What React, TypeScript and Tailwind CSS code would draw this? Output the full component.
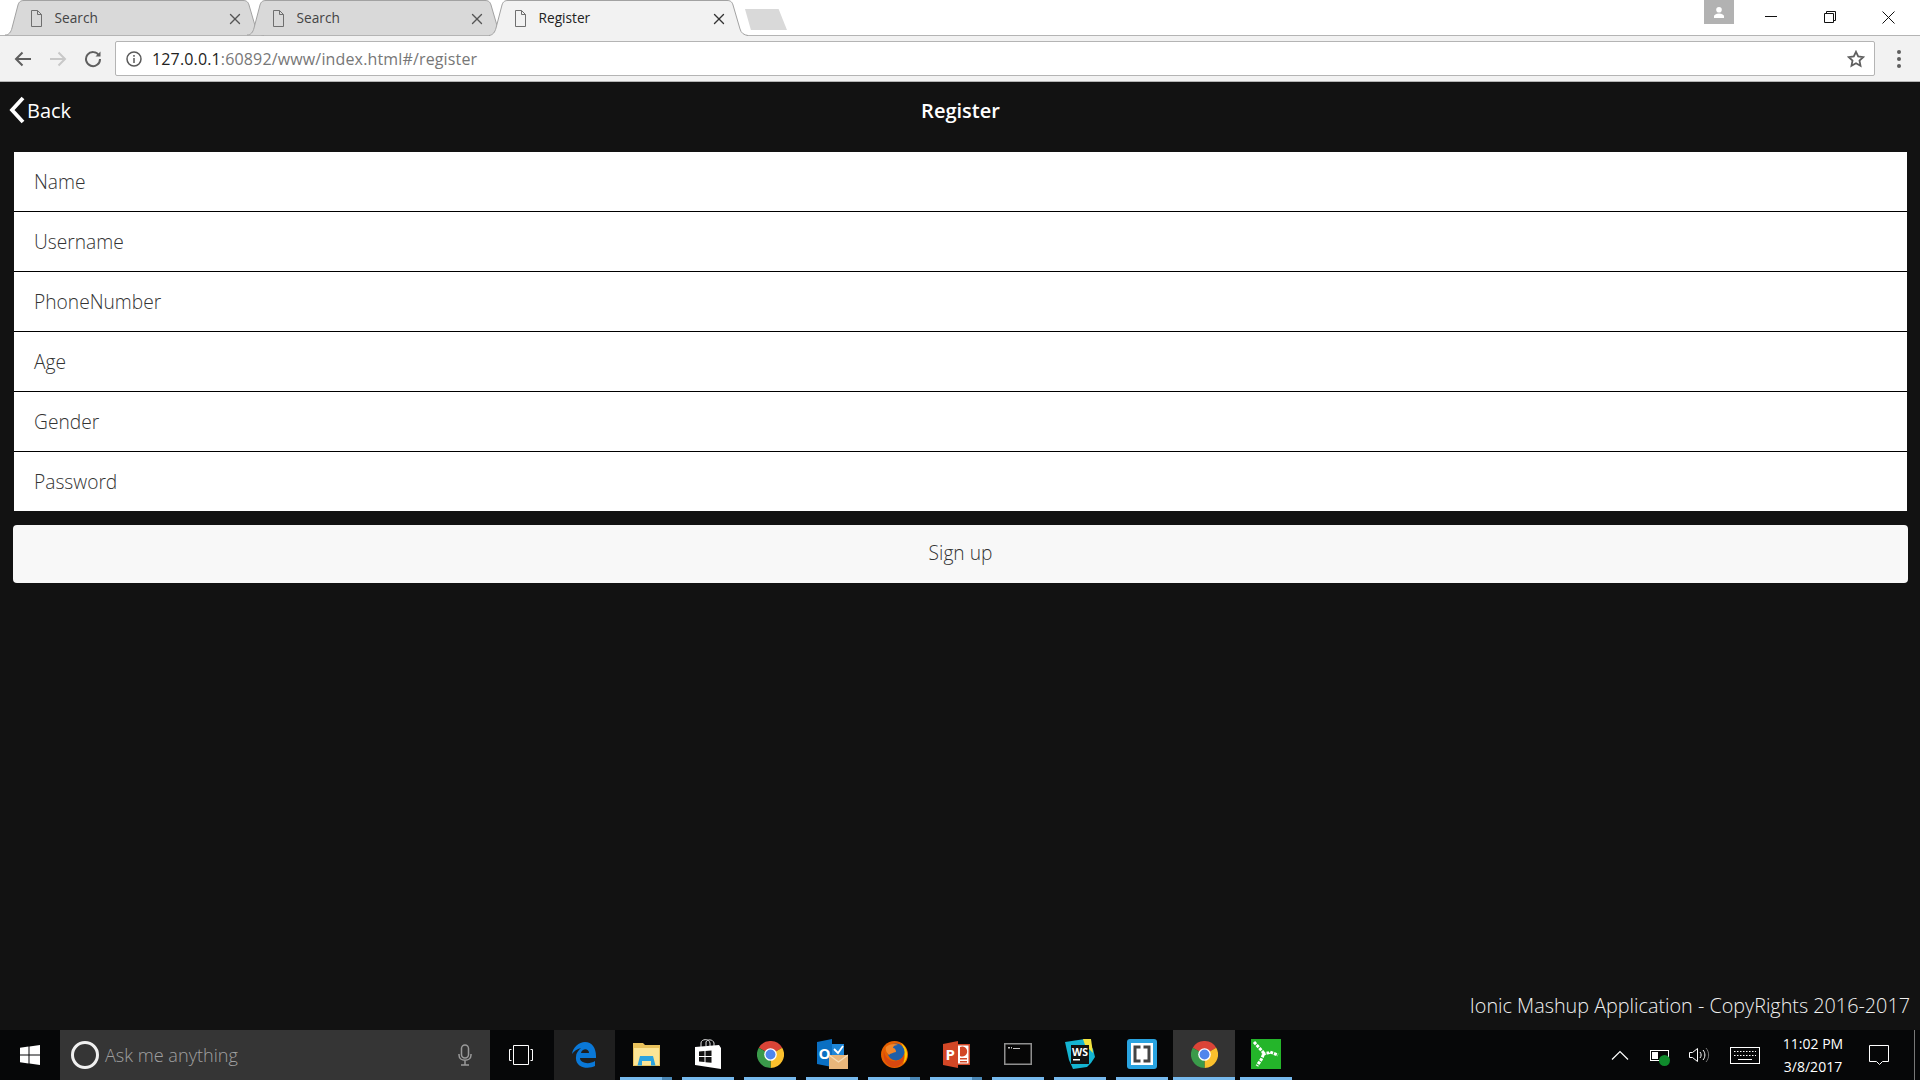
import { X } from "lucide-react";

const FONT = "[font-family:'Open_Sans','Noto_Sans',sans-serif]";

const fields = ["Name", "Username", "PhoneNumber", "Age", "Gender", "Password"];

const DocIcon = () => (
  <svg width="13" height="17" viewBox="0 0 13 17" fill="none" stroke="#6f6f6f" strokeWidth="1">
    <path d="M1.5 .5h6l4 4v12h-10z" />
    <path d="M7.5 .5v4h4" />
  </svg>
);

const Tab = ({ title, active, first }: { title: string; active?: boolean; first?: boolean }) => (
  <div className={`relative h-[37px] w-[259px] shrink-0 ${first ? "" : "-ml-[17px]"} ${active ? "z-10" : ""}`}>
    <svg className="absolute inset-0" width="259" height="37" viewBox="0 0 259 37">
      <path
        d={
          active
            ? "M0 36 V35.500 C4 35 6 32 7 28 L13 5 C14 1.500 16 .5 19 .5 H238 C241 .5 243 1.500 244 5 L251 29 C252 33 255 35 259 35.500 V36"
            : "M0 35 C4 35 6 32 7 28 L13 5 C14 1.500 16 .5 19 .5 H238 C241 .5 243 1.500 244 5 L251 29 C252 33 255 35 259 35"
        }
        fill={active ? "#f2f2f2" : "#d9d9d9"}
        stroke="#a2a2a2"
      />
    </svg>
    <div className="absolute inset-0 flex items-center pl-[25px] pr-[20px]">
      <DocIcon />
      <span className={`ml-[11.500px] flex-1 text-[13.700px] ${active ? "text-[#222]" : "text-[#444]"}`}>{title}</span>
      <X size={18} strokeWidth={1.800} color={active ? "#333" : "#555"} />
    </div>
  </div>
);

const ChromeIcon = () => (
  <svg width="27" height="27" viewBox="0 0 24 24">
    <path d="M12 12L1.600 6A12 12 0 0 1 22.400 6Z" fill="#db4437" />
    <path d="M12 12L22.400 6A12 12 0 0 1 12 24Z" fill="#fbc02d" />
    <path d="M12 12L12 24A12 12 0 0 1 1.600 6Z" fill="#3a9a4a" />
    <circle cx="12" cy="12" r="5.600" fill="#fff" />
    <circle cx="12" cy="12" r="4.400" fill="#4f86ec" />
  </svg>
);

const EdgeIcon = () => (
  <svg width="24" height="26" viewBox="0 0 24 26">
    <path
      fillRule="evenodd"
      d="M0 12C1 5 7 0 13 0C20 0 24 6 24 14V16H8C8 21 17 23 23 19V24C15 28 3 25 4 15C4 11 6 9 9 6C5 7 2 9 0 12ZM9 11H17C17 6 10 6 9 11Z"
      fill="#0a78d7"
    />
  </svg>
);

const ExplorerIcon = () => (
  <svg width="27" height="23" viewBox="0 0 27 23">
    <path d="M0 0h10l2 2h15v21H0z" fill="#e9c25c" />
    <path d="M1 5h25v17H1z" fill="#fce596" />
    <path d="M4.500 22.500L7 13h13l2.500 9.500H18V18H9v4.500z" fill="#2ba3df" />
  </svg>
);

const StoreIcon = () => (
  <svg width="26" height="30" viewBox="0 0 26 30">
    <path d="M6 8V4c0-4 8-5 9 0v4M11 7V3c1-3 7-3 8 1v3" fill="none" stroke="#ddd" strokeWidth="1" />
    <path d="M0 8L24 6L26 9V30L0 26z" fill="#fff" />
    <path d="M4 12.500l5.500-.5v5H4zM10.500 12l6-.5v5.500h-6zM4 18h5.500v5L4 22.500zM10.500 18h6v5.800l-6-.6z" fill="#111" />
  </svg>
);

const OutlookIcon = () => (
  <svg width="31" height="30" viewBox="0 0 31 30">
    <path d="M0 3L15 0v28L0 25z" fill="#0a6fc2" />
    <path d="M15 5h12v14H15z" fill="#1d86d8" />
    <path d="M17 10l4 4 5-7" fill="none" stroke="#fff" strokeWidth="1.800" />
    <text x="1.500" y="20" fontSize="15" fontWeight="700" fill="#fff" fontFamily="Open Sans">O</text>
    <path d="M12 16h19v14H12z" fill="#e9b67a" />
    <path d="M12 16l9.500 7 9.500-7" fill="none" stroke="#f6dcb5" strokeWidth="1.200" />
  </svg>
);

const FirefoxIcon = () => (
  <svg width="27" height="27" viewBox="0 0 27 27">
    <circle cx="13.500" cy="13.500" r="13.500" fill="#e66000" />
    <path d="M20 2a13.500 13.500 0 0 1 2 21c2-4 3-13-2-21z" fill="#ffcb00" />
    <circle cx="15" cy="11" r="8.500" fill="#1f5fa8" />
    <path d="M3 9c0 7 6 12 12 11 4-.5 7-3 8-7 1 7-4 13-10 13C6 26 1 18 3 9z" fill="#d9480f" />
    <path d="M5 6c3-3 9-4 12-2-3 0-5 1-5 3 2 0 3 2 3 4-3 1-5 1-7 3-2-2-4-5-3-8z" fill="#f2862a" />
  </svg>
);

const PptIcon = () => (
  <svg width="27" height="27" viewBox="0 0 27 27">
    <path d="M13 3h14v21H13z" fill="#d24726" />
    <path d="M15 4.500h10.500v18H15z" fill="#fff" />
    <path d="M17 6a5 5 0 1 1 0 9z" fill="#d24726" />
    <path d="M17 17h7v1.500h-7zM17 20h7v1.500h-7z" fill="#d24726" />
    <path d="M0 3L15 0v27L0 24z" fill="#d24726" />
    <text x="2.500" y="19" fontSize="15" fontWeight="700" fill="#fff" fontFamily="Open Sans">P</text>
  </svg>
);

const CmdIcon = () => (
  <svg width="28" height="22" viewBox="0 0 28 22">
    <path d="M.75 .75h26.500v20.500H.75z" fill="#060606" stroke="#8f8f8f" strokeWidth="1.500" />
    <path d="M4 4h2v1.500H4zM7 4h1v1.500H7zM9 5h7v1H9z" fill="#c4c4c4" />
  </svg>
);

const WsIcon = () => (
  <svg width="30" height="30" viewBox="0 0 30 30">
    <path d="M0 3L20 0l8 10 2 8-4 6-4 4-14 2-4-9z" fill="#14b4d2" />
    <path d="M18 0h8l2 14-8-8z" fill="#f2e33f" />
    <path d="M6 6h18v19H6z" fill="#111" />
    <text x="7" y="17" fontSize="10.500" fontWeight="700" fill="#fff" fontFamily="Open Sans">WS</text>
    <path d="M8 20h7v1.500H8z" fill="#fff" />
  </svg>
);

const BracketsIcon = () => (
  <svg width="30" height="30" viewBox="0 0 30 30">
    <rect width="30" height="30" rx="3" fill="#29a3e0" />
    <rect x="4" y="4" width="22" height="22" fill="#fff" />
    <path d="M13.500 8H8v14h5.500M16.500 8H22v14h-5.500" fill="none" stroke="#444" strokeWidth="3" />
  </svg>
);

const SketchIcon = () => (
  <svg width="30" height="30" viewBox="0 0 30 30">
    <rect width="30" height="30" fill="#24b52a" />
    <path
      d="M3 3l9 10c1 5-3 9-6 14M12 16c3-3 5-1 7-3l8 3"
      fill="none"
      stroke="#fff"
      strokeWidth="3"
      strokeDasharray="3 1"
    />
  </svg>
);

const taskIcons = [
  { icon: <ExplorerIcon />, group: true },
  { icon: <StoreIcon /> },
  { icon: <ChromeIcon /> },
  { icon: <OutlookIcon /> },
  { icon: <FirefoxIcon />, group: true },
  { icon: <PptIcon />, group: true },
  { icon: <CmdIcon /> },
  { icon: <WsIcon /> },
  { icon: <BracketsIcon /> },
  { icon: <ChromeIcon />, active: true },
  { icon: <SketchIcon /> },
];

const App = () => {
  return (
    <div className={`flex h-screen w-full flex-col overflow-hidden bg-[#121212] ${FONT}`}>
      {/* Tab strip */}
      <div className="flex h-[35px] shrink-0 items-start bg-white pl-[5px] pr-[25px]">
        <Tab title="Search" first />
        <Tab title="Search" />
        <Tab title="Register" active />
        <div className="ml-[-3px] mt-[9px] h-[21px] w-[42px] bg-[#d9d9d9] [clip-path:polygon(0_0,80%_0,100%_100%,14%_100%)]" />
        <div className="ml-auto flex items-start">
          <div className="flex h-[24px] w-[30px] items-center justify-center bg-[#b2b2b2]">
            <svg width="12" height="11" viewBox="0 0 12 11" fill="#fff">
              <circle cx="6" cy="2.800" r="2.800" />
              <path d="M1 11V9c0-1 2-2.500 5-2.500S11 8 11 9v2z" />
            </svg>
          </div>
          <div className="ml-[30px] flex h-[33px] w-[14px] items-center justify-center">
            <svg width="12" height="1" viewBox="0 0 12 1">
              <path d="M0 0h12v1H0z" fill="#111" />
            </svg>
          </div>
          <div className="ml-[45px] flex h-[34px] w-[14px] items-center justify-center">
            <svg width="12" height="12" viewBox="0 0 12 12" fill="none" stroke="#111">
              <path d="M.5 2.500h9v9h-9zM2.500 2.500v-2h9v9h-2" />
            </svg>
          </div>
          <div className="ml-[44px] flex h-[34px] w-[14px] items-center justify-center">
            <svg width="13" height="13" viewBox="0 0 13 13" fill="none" stroke="#111">
              <path d="M.5 .5l12 12M12.500 .5l-12 12" />
            </svg>
          </div>
        </div>
      </div>

      {/* Toolbar */}
      <div className="flex h-[47px] shrink-0 items-center border-y border-y-[#b4b4b4] bg-[#f2f2f2] pl-[14px] pr-[19px]">
        <svg width="18" height="16" viewBox="0 0 18 16" fill="none" stroke="#5f5f5f" strokeWidth="2">
          <path d="M17 8H2M8.500 1.500L2 8l6.500 6.500" />
        </svg>
        <svg className="ml-[17px]" width="18" height="16" viewBox="0 0 18 16" fill="none" stroke="#c8c8c8" strokeWidth="2">
          <path d="M1 8h15M9.500 1.500L16 8l-6.500 6.500" />
        </svg>
        <svg className="ml-[17px]" width="18" height="18" viewBox="0 0 18 18" fill="none" stroke="#5f5f5f" strokeWidth="2">
          <path d="M15 5.500A7 7 0 1 0 16 9" />
          <path d="M16.500 1.500v5h-5z" fill="#5f5f5f" stroke="none" />
        </svg>
        <div className="ml-[13px] flex h-[35px] flex-1 items-center rounded-[2px] border border-[#b4b4b4] bg-white pl-[10px] pr-[9px]">
          <svg width="16" height="16" viewBox="0 0 16 16" fill="none" stroke="#5a5a5a" strokeWidth="1.500">
            <circle cx="8" cy="8" r="7" />
            <path d="M8 7v5M8 4v1.800" />
          </svg>
          <span className="ml-[10px] flex-1 text-[16px] tracking-[0.15px] text-[#777]">
            <span className="text-[#222]">127.0.0.1</span>:60892/www/index.html#/register
          </span>
          <svg width="18" height="18" viewBox="0 0 18 18" fill="none" stroke="#5f5f5f" strokeWidth="1.800">
            <path d="M9 1.800l2.200 4.700 5 .6-3.700 3.500 1 5.100L9 13.200l-4.500 2.500 1-5.100L1.800 7.100l5-.6z" />
          </svg>
        </div>
        <div className="ml-[22px] flex flex-col gap-[3px]">
          <span className="h-[4px] w-[4px] rounded-full bg-[#5f5f5f]" />
          <span className="h-[4px] w-[4px] rounded-full bg-[#5f5f5f]" />
          <span className="h-[4px] w-[4px] rounded-full bg-[#5f5f5f]" />
        </div>
      </div>

      {/* Page */}
      <div className="flex min-h-0 flex-1 flex-col pl-[14px] pr-[13px]">
        <div className="relative flex h-[57px] shrink-0 items-center justify-center">
          <div className="absolute -left-[6px] flex items-center text-[20px] text-white">
            <svg className="-mt-[2px]" width="18" height="28" viewBox="0 0 18 28" fill="none" stroke="#fff" strokeWidth="3.800">
              <path d="M15 2L4 14l11 12" />
            </svg>
            <span className="ml-px">Back</span>
          </div>
          <h1 className="text-[20px] font-semibold text-white">Register</h1>
        </div>

        <div className="mt-[13px] flex flex-col bg-white">
          {fields.map((field, i) => (
            <div
              key={field}
              className={`flex items-center px-[20px] pt-[2px] text-[19.200px] font-[350] text-[#333] ${
                i < fields.length - 1 ? "h-[60px] border-b border-b-black" : "h-[59px]"
              }`}
            >
              {field}
            </div>
          ))}
        </div>

        <button className="-mx-px mt-[14px] h-[58px] rounded-[4px] bg-[#f8f8f8] pb-[2px] text-[19.200px] font-[350] text-[#333]">
          Sign up
        </button>

        <p className="mt-auto -mr-[3px] pb-[10px] text-right text-[19.800px] font-light leading-[28px] text-[#f0f0f0]">
          Ionic Mashup Application - CopyRights 2016-2017
        </p>
      </div>

      {/* Windows taskbar */}
      <div className="flex h-[50px] shrink-0 items-center bg-[#060708]">
        <div className="flex h-full w-[60px] items-center justify-center">
          <svg width="20" height="20" viewBox="0 0 20 20" fill="#fff">
            <path d="M0 2.800l8.500-1.200v7.900H0zM9.500 1.400L20 0v9.500H9.500zM0 10.500h8.500v7.900L0 17.200zM9.500 10.500H20V20L9.500 18.600z" />
          </svg>
        </div>
        <div className="flex h-full w-[430px] items-center bg-[#353535] pl-[11px] pr-[18px]">
          <span className="h-[28px] w-[28px] rounded-full border-[3px] border-[#f0f0f0]" />
          <span className="ml-[6px] flex-1 pt-px text-[18.100px] font-[350] text-[#a0a0a0]">Ask me anything</span>
          <svg width="14" height="22" viewBox="0 0 14 22" fill="none" stroke="#9a9a9a" strokeWidth="1.500">
            <rect x="3.500" y="1" width="7" height="13" rx="3.500" />
            <path d="M1 10v1c0 7 12 7 12 0v-1M7 17v4M3 21h8" />
          </svg>
        </div>
        <div className="flex h-full w-[64px] items-center justify-center pr-[2px]">
          <svg width="24" height="20" viewBox="0 0 24 20" fill="none" stroke="#fff">
            <path d="M4.500 .5h15v19h-15zM2.500 4.500H.5v11h2M21.500 4.500h2v11h-2" />
          </svg>
        </div>
        <div className="flex h-full w-[61px] items-center justify-center bg-[#1f1f1f] pr-[2px]">
          <EdgeIcon />
        </div>
        {taskIcons.map((item, i) => (
          <div
            key={i}
            className={`relative flex h-full w-[62px] items-center justify-center pb-[2px] ${item.active ? "bg-[#333]" : ""}`}
          >
            {item.icon}
            <span className={`absolute bottom-0 h-[3px] bg-[#76b9ed] ${item.active ? "inset-x-0" : "inset-x-[5px]"}`} />
            {item.group && <span className="absolute bottom-0 right-[5px] h-[3px] w-[10px] bg-[#4a86b4]" />}
          </div>
        ))}

        {/* Tray */}
        <div className="ml-auto flex h-full items-center text-white">
          <svg width="18" height="10" viewBox="0 0 18 10" fill="none" stroke="#fff" strokeWidth="1.200">
            <path d="M1 9.500l8-8 8 8" />
          </svg>
          <div className="relative ml-[21px] flex h-[11px] w-[19px] items-center border border-white px-px">
            <span className="h-[7px] w-[6px] bg-white" />
            <span className="absolute -bottom-[6px] -right-[2px] h-[11px] w-[11px] rounded-full bg-[#0f8a2c]" />
          </div>
          <svg className="ml-[20px]" width="21" height="16" viewBox="0 0 21 16" fill="none" stroke="#fff">
            <path d="M.5 5.500h3l5-4v13l-5-4h-3z" />
            <path d="M11 5c1.500 2 1.500 4 0 6M14 3c2.500 3 2.500 7 0 10" />
            <path d="M17 1c3.500 4 3.500 10 0 14" stroke="#777" />
          </svg>
          <svg className="ml-[20px]" width="30" height="17" viewBox="0 0 30 17" fill="none" stroke="#fff">
            <rect x=".5" y=".5" width="29" height="16" />
            <path d="M4 4.500h22M4 8.500h22" strokeDasharray="1.500 1.500" />
            <path d="M8 12.500h14" />
          </svg>
          <div className="ml-[22px] flex w-[62px] flex-col text-center text-[14px] leading-[23px]">
            <span>11:02 PM</span>
            <span>3/8/2017</span>
          </div>
          <svg className="ml-[25px]" width="20" height="20" viewBox="0 0 20 20" fill="none" stroke="#fff">
            <path d="M.5 .5h19v16h-6l-3 3-3-3h-7z" />
          </svg>
          <span className="ml-[25px] h-full w-px bg-[#777]" />
          <span className="w-[5px]" />
        </div>
      </div>
    </div>
  );
};

export default App;
